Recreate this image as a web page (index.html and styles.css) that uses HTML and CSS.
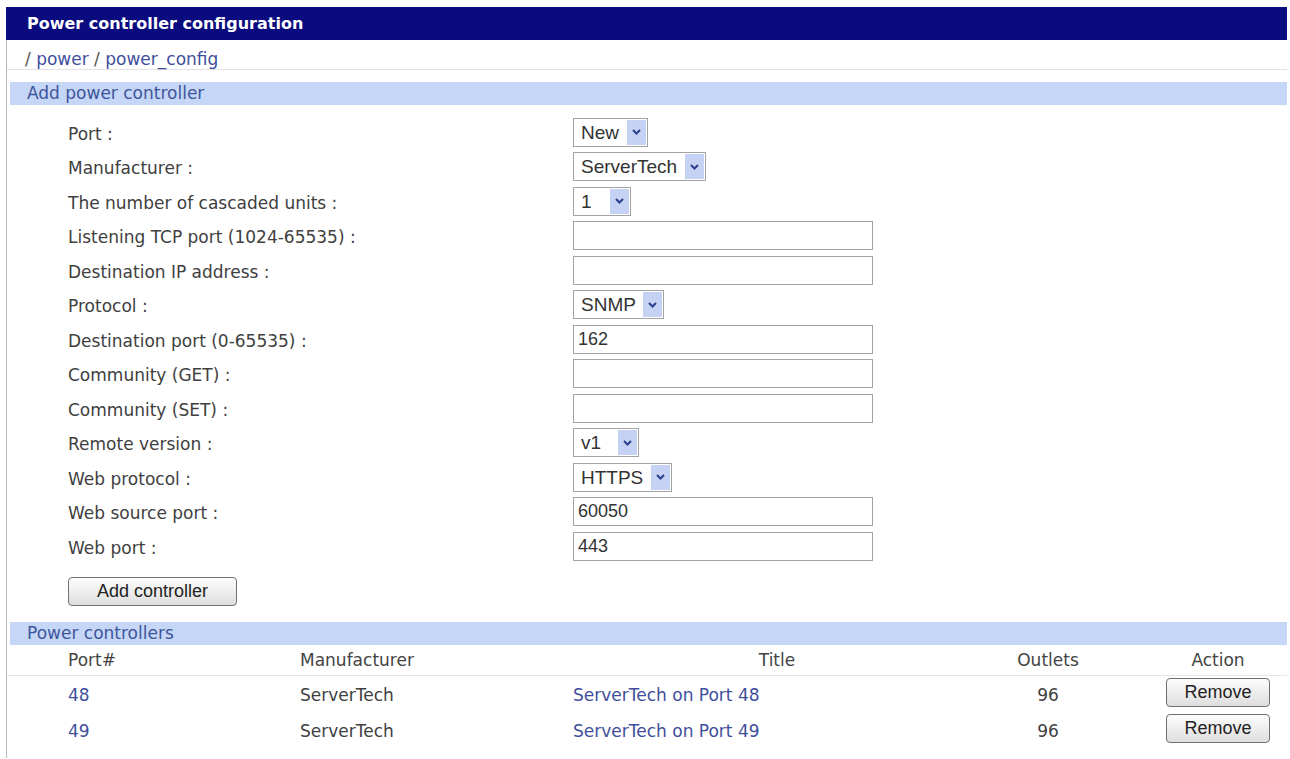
FILE: index.html
```html
<!DOCTYPE html>
<html lang="en">
<head>
    <meta charset="UTF-8">
    <meta name="viewport" content="width=device-width, initial-scale=1.0">
    <title>Power controller configuration</title>
    <link rel="stylesheet" href="styles.css">
</head>
<body>

<div class="panel">

    <div class="panel-title">Power controller configuration</div>

    <div class="panel-body">

        <!-- Breadcrumb -->
        <div class="crumbs">
            <span class="sep">/</span> <a href="#">power</a> <span class="sep">/</span> <a href="#">power_config</a>
        </div>

        <!-- Add power controller -->
        <div class="section-head">Add power controller</div>

        <form class="config-form" onsubmit="return false;">
            <div class="form-row">
                <label for="port">Port :</label>
                <span class="select">
                    <select id="port">
                        <option value="new">New</option>
                        <option value="48">48</option>
                        <option value="49">49</option>
                    </select>
                    <span class="select-arrow"><svg width="9" height="6" viewBox="0 0 9 6"><path d="M1 1l3.5 3.5L8 1" fill="none" stroke="#2b3f8c" stroke-width="2"/></svg></span>
                </span>
            </div>
            <div class="form-row">
                <label for="manufacturer">Manufacturer :</label>
                <span class="select">
                    <select id="manufacturer">
                        <option value="servertech">ServerTech</option>
                        <option value="apc">APC</option>
                        <option value="cyclades">Cyclades</option>
                    </select>
                    <span class="select-arrow"><svg width="9" height="6" viewBox="0 0 9 6"><path d="M1 1l3.5 3.5L8 1" fill="none" stroke="#2b3f8c" stroke-width="2"/></svg></span>
                </span>
            </div>
            <div class="form-row">
                <label for="units">The number of cascaded units :</label>
                <span class="select">
                    <select id="units">
                        <option value="1">1</option>
                        <option value="2">2</option>
                        <option value="4">4</option>
                        <option value="10">10</option>
                    </select>
                    <span class="select-arrow"><svg width="9" height="6" viewBox="0 0 9 6"><path d="M1 1l3.5 3.5L8 1" fill="none" stroke="#2b3f8c" stroke-width="2"/></svg></span>
                </span>
            </div>
            <div class="form-row">
                <label for="listenPort">Listening TCP port (1024-65535) :</label>
                <input type="text" id="listenPort" class="text-field">
            </div>
            <div class="form-row">
                <label for="destIp">Destination IP address :</label>
                <input type="text" id="destIp" class="text-field">
            </div>
            <div class="form-row">
                <label for="protocol">Protocol :</label>
                <span class="select">
                    <select id="protocol">
                        <option value="snmp">SNMP</option>
                        <option value="telnet">Telnet</option>
                    </select>
                    <span class="select-arrow"><svg width="9" height="6" viewBox="0 0 9 6"><path d="M1 1l3.5 3.5L8 1" fill="none" stroke="#2b3f8c" stroke-width="2"/></svg></span>
                </span>
            </div>
            <div class="form-row">
                <label for="destPort">Destination port (0-65535) :</label>
                <input type="text" id="destPort" class="text-field" value="162">
            </div>
            <div class="form-row">
                <label for="communityGet">Community (GET) :</label>
                <input type="text" id="communityGet" class="text-field">
            </div>
            <div class="form-row">
                <label for="communitySet">Community (SET) :</label>
                <input type="text" id="communitySet" class="text-field">
            </div>
            <div class="form-row">
                <label for="remoteVersion">Remote version :</label>
                <span class="select">
                    <select id="remoteVersion">
                        <option value="v1">v1</option>
                        <option value="v2c">v2c</option>
                    </select>
                    <span class="select-arrow"><svg width="9" height="6" viewBox="0 0 9 6"><path d="M1 1l3.5 3.5L8 1" fill="none" stroke="#2b3f8c" stroke-width="2"/></svg></span>
                </span>
            </div>
            <div class="form-row">
                <label for="webProtocol">Web protocol :</label>
                <span class="select">
                    <select id="webProtocol">
                        <option value="https">HTTPS</option>
                        <option value="http">HTTP</option>
                    </select>
                    <span class="select-arrow"><svg width="9" height="6" viewBox="0 0 9 6"><path d="M1 1l3.5 3.5L8 1" fill="none" stroke="#2b3f8c" stroke-width="2"/></svg></span>
                </span>
            </div>
            <div class="form-row">
                <label for="webSourcePort">Web source port :</label>
                <input type="text" id="webSourcePort" class="text-field" value="60050">
            </div>
            <div class="form-row">
                <label for="webPort">Web port :</label>
                <input type="text" id="webPort" class="text-field" value="443">
            </div>

            <div class="form-actions">
                <button type="button" class="btn btn-add">Add controller</button>
            </div>
        </form>

        <!-- Power controllers list -->
        <div class="section-head section-list">Power controllers</div>

        <table class="controllers">
            <colgroup>
                <col class="col-port">
                <col class="col-maker">
                <col class="col-title">
                <col class="col-outlets">
                <col>
            </colgroup>
            <thead>
                <tr>
                    <th class="cell-port">Port#</th>
                    <th>Manufacturer</th>
                    <th class="center">Title</th>
                    <th class="center">Outlets</th>
                    <th class="cell-action">Action</th>
                </tr>
            </thead>
            <tbody>
                <tr>
                    <td class="cell-port"><a href="#">48</a></td>
                    <td>ServerTech</td>
                    <td><a href="#">ServerTech on Port 48</a></td>
                    <td class="center">96</td>
                    <td class="cell-action"><button type="button" class="btn btn-remove">Remove</button></td>
                </tr>
                <tr>
                    <td class="cell-port"><a href="#">49</a></td>
                    <td>ServerTech</td>
                    <td><a href="#">ServerTech on Port 49</a></td>
                    <td class="center">96</td>
                    <td class="cell-action"><button type="button" class="btn btn-remove">Remove</button></td>
                </tr>
            </tbody>
        </table>

    </div>
</div>

</body>
</html>
```

FILE: styles.css
```css
body {
    margin: 7px 0 0 6px;
    font-family: "DejaVu Sans", Verdana, sans-serif;
    font-size: 17px;
    color: #404040;
    background-color: #fff;
}

a {
    color: #3f4f9c;
    text-decoration: none;
}

.panel {
    width: 1281px;
}

.panel-title {
    height: 33px;
    line-height: 34px;
    padding-left: 21px;
    background-color: #0b0b80;
    color: #fff;
    font-size: 16px;
    font-weight: bold;
}

.panel-body {
    border-left: 1px solid #b9b9c2;
    padding-bottom: 10px;
}

.crumbs {
    padding: 9px 0 0 18px;
    line-height: 20px;
    border-bottom: 1px solid #e3e3e3;
}

.crumbs .sep {
    color: #555;
}

.section-head {
    margin: 12px 0 0 3px;
    height: 23px;
    line-height: 23px;
    padding-left: 17px;
    background-color: #c6d6f6;
    color: #3d559c;
}

.section-list {
    margin-top: 16px;
}

/* form */

.config-form {
    padding: 10px 0 0 61px;
}

.form-row {
    display: grid;
    grid-template-columns: 505px auto;
    align-items: center;
    justify-items: start;
    height: 34.5px;
}

.form-row label {
    padding-top: 3px;
}

.select {
    display: inline-flex;
    height: 29px;
    box-sizing: border-box;
    padding: 1px;
    border: 1px solid #a3a3a3;
    background-color: #fff;
}

.select select {
    -webkit-appearance: none;
    appearance: none;
    border: none;
    outline: none;
    background: transparent;
    padding: 0 7px 0 6px;
    font-family: "Liberation Sans", Arial, sans-serif;
    font-size: 19px;
    color: #333;
}

.select-arrow {
    display: flex;
    align-items: center;
    justify-content: center;
    width: 19px;
    background-color: #c5d2f4;
}

.text-field {
    width: 300px;
    height: 29px;
    box-sizing: border-box;
    padding: 0 4px;
    border: 1px solid #a3a3a3;
    font-family: "Liberation Sans", Arial, sans-serif;
    font-size: 18px;
    color: #333;
}

.form-actions {
    margin-top: 13px;
}

.btn {
    height: 29px;
    box-sizing: border-box;
    border: 1px solid #707070;
    border-radius: 4px;
    background: linear-gradient(#fdfdfd, #ececec 55%, #dedede);
    font-family: "Liberation Sans", Arial, sans-serif;
    font-size: 18px;
    color: #222;
    cursor: pointer;
}

.btn-add {
    width: 169px;
}

.btn-remove {
    width: 104px;
}

/* controllers table */

.controllers {
    width: 100%;
    table-layout: fixed;
    border-collapse: collapse;
}

.col-port {
    width: 293px;
}

.col-maker {
    width: 273px;
}

.col-title {
    width: 408px;
}

.col-outlets {
    width: 134px;
}

.controllers th,
.controllers td {
    padding: 0;
    text-align: left;
    white-space: nowrap;
}

.controllers th {
    height: 30px;
    font-weight: normal;
    color: #444;
    border-bottom: 1px solid #e6e6e6;
}

.controllers td {
    height: 34px;
    padding-top: 2px;
}

.controllers .cell-port {
    padding-left: 61px;
}

.controllers .center {
    text-align: center;
}

.controllers td.cell-action {
    padding-top: 0;
    padding-bottom: 2px;
}

.controllers .cell-action {
    padding-left: 34px;
    text-align: center;
}
```
